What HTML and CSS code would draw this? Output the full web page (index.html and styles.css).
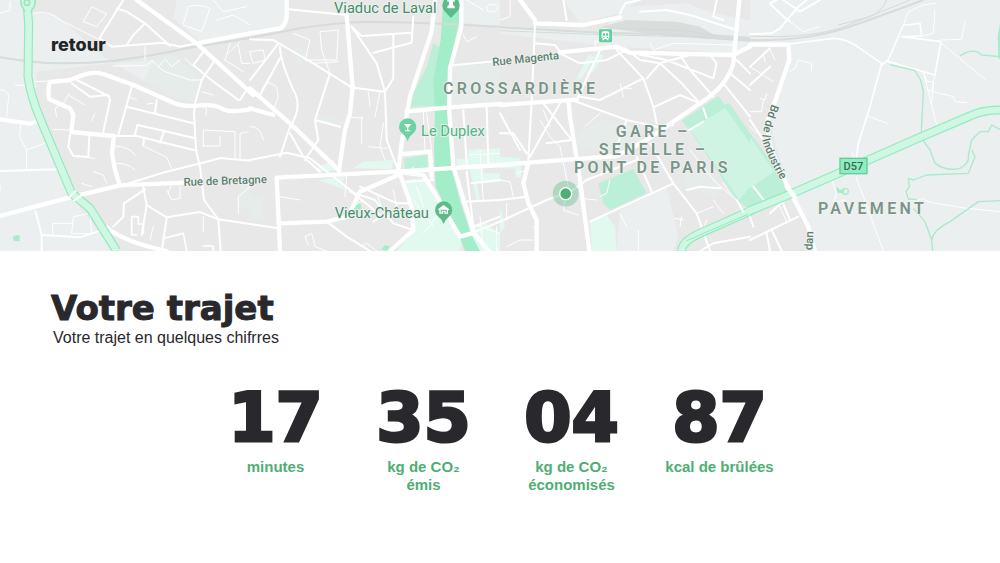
FILE: index.html
```html
<!DOCTYPE html>
<html lang="fr">
<head>
<meta charset="utf-8">
<meta name="viewport" content="width=device-width, initial-scale=1">
<title>Votre trajet</title>
<link rel="stylesheet" href="styles.css">
</head>
<body>
<header class="hero">
<svg class="map" viewBox="0 0 3000 753" role="img" aria-label="Carte du trajet">
<rect class="urban" width="3000" height="753"/>

<!-- west -->
<g>
<path class="land" d="M0 0H70L100 40L170 45L310 170L445 250L475 180L330 190L110 215L108 260L115 360L215 590L340 753H0ZM530 0H750V100L600 125L520 55Z"/>
<path class="park" d="M475 170L520 165L600 230L590 305L540 300L430 240ZM720 560L750 545V640L712 610Z"/>
<path class="mint2" d="M38 712L48 705L60 708L58 724L42 723Z"/>
<path class="rail" d="M0 172Q70 184 130 188Q230 193 330 184Q460 168 560 145L750 114"/>
<g class="r1"><path d="M410 0L590 130L760 285"/><path d="M590 130L750 100"/><path d="M0 648L210 592L360 556L550 548"/><path d="M0 358L90 371L120 360"/><path d="M750 328Q690 338 670 328Q650 312 600 316Q550 322 520 308L400 255L310 222Q280 214 250 225L210 240L150 246Q142 270 148 298L210 325L220 345L214 396L342 408L336 460L345 510L358 552"/><path d="M320 682Q370 725 500 753"/></g>
<g class="r2"><path d="M300 115L335 140L400 135L490 128L540 140L590 130"/><path d="M300 112L370 0M380 135L400 105L435 70L485 115L510 138M435 70L380 35L350 25"/><path d="M720 300L740 270M615 148L580 195L640 245L715 300M645 180L605 240L585 310L582 340L588 450L600 500L612 600L655 658L662 753"/><path d="M395 262L355 405M380 320L580 370M470 300L465 340M345 408H410L590 452M405 405L412 375L480 390L585 415M492 395L480 428M430 435L432 415"/><path d="M370 555L500 515L620 485L660 474L750 482M430 562L440 615L500 652L600 636L655 658L750 672M500 655L485 753M340 680L370 650L372 610L435 568M440 615L425 705"/><path d="M0 513L170 508L190 495M107 635L125 705V753M125 705L240 712L320 685"/><path d="M210 405L205 440L220 468L265 470L268 408M215 250L270 290L325 285L330 300L310 395M230 240L290 270L328 290"/></g>
<g class="r3"><path d="M100 40Q150 30 180 60L300 120M45 255L108 258M105 245L210 240M0 270Q25 270 26 290L20 350M62 375L58 410L80 450L135 430M80 450V510M0 40L30 30V5"/><path d="M250 65L275 20L320 42L290 80L250 65M550 70L565 20Q600 10 630 25L605 95L550 75M640 0L670 35L740 20M650 60L700 45L750 75"/><path d="M340 198L440 197L455 180L475 200L495 178L515 200L540 180M475 200L495 215L570 240H605M435 140V180M680 165L720 125M715 135L725 190H750M672 178L730 215M555 175L580 200M690 130L675 180"/><path d="M208 280L190 310L165 325L170 350M205 285L255 315M385 292L410 298M440 312L460 310M275 362L285 340M160 388L205 390M345 438Q390 440 405 465M350 490Q385 490 405 510M430 438L500 472L515 505M220 468L285 475M245 550L275 560M280 515L310 525L320 550"/><path d="M610 440V390L705 395V475M610 438H660V410M720 475V400L745 395M500 570L515 600L540 595V560M515 550L505 580M215 700L220 650L270 640L275 700ZM158 705V670H220M590 315L620 325L618 345M605 275L640 285M0 555V570M610 650V695M460 680L450 720M750 560L715 590V640"/></g>
<path class="r4" d="M395 705V650H415V672H430V700M410 705H395M490 715L550 700L560 753M640 753V738H610"/>
<path class="hw-edge" d="M80 0L86 70L84 230Q92 290 122 360L215 580L270 625L350 753"/>
<path class="hw" d="M80 0L86 70L84 230Q92 290 122 360L215 580L270 625L350 753"/>
<path class="hw-node" d="M62 0L65 18L77 35M106 0L103 18L92 35"/><path class="hw-fill" d="M65 0H103L100 18L88 38H80L68 18Z"/><circle class="ring" cx="81" cy="8" r="8"/>
<path class="r2" d="M203 597L226 574M222 602L244 586"/>
</g>

<!-- centre west -->
<g transform="translate(750 0)">
<path class="land" d="M0 0H110L103 85L0 105ZM640 0H750V85L640 65Z"/>
<path class="park" d="M605 200L750 190V300L600 315ZM205 340L280 365L270 390L200 365ZM0 590H40V655H0ZM130 135L180 160L150 200Z"/>
<path class="mint0" d="M460 540L520 535L590 660L640 700L630 753H440L490 690ZM205 500L250 480L265 510L200 515ZM310 505L340 485L430 480L425 508ZM205 540L290 530L270 550L300 575ZM655 450L750 445V490H700V520H750V545L680 550L690 600H680L660 510L620 495V475L655 480ZM655 690L700 665L750 700V753H670Z"/>
<path class="river-bank" d="M550 130L568 140L555 318L480 320L490 280L530 200ZM462 475L532 465L534 510L515 518L465 508Z"/>
<path class="mint1" d="M310 620L330 605L335 625L315 635ZM395 748L405 735L420 740L410 753Z"/>
<path class="river" d="M580 0H630L628 60L594 220L596 320L604 505L632 610L662 700L690 753H645L625 700L557 560L552 450L555 340L550 240L572 120Z"/>
<path class="rail" d="M0 114L150 85Q250 68 350 65Q500 66 750 80"/>
<g class="r1"><path d="M0 100L90 85Q105 80 110 50V0M290 45L308 262L300 340L285 390L268 505M0 265L120 370L268 512M0 325L70 345M80 533L440 515L750 495M80 533L90 753"/><path d="M555 0L545 95L480 290L455 430L445 510L460 550L485 620L490 690L420 753M634 0V80L600 205L597 325L610 500L647 620L672 700L717 753M470 335L595 322L750 312"/><path d="M445 525L330 575L295 650L230 665L90 670M440 515L520 525L560 590L630 710L665 700M460 462L540 455L545 530"/></g>
<g class="r2"><path d="M115 28L290 45M305 80L380 190L405 275L430 235V105M305 80L335 108L485 98M370 158L485 128L490 50M300 262L405 275L410 420L440 500M0 118L70 120L190 190L305 262M85 130L0 240M90 175L30 285M90 140Q90 180 130 270Q160 320 120 380L90 470M240 220L195 360L270 380M195 360L205 420L165 480"/><path d="M0 480L110 458L180 475L320 585M120 400L160 470L210 515M300 575L375 600L430 670L490 690M310 580L395 648L460 650M330 560L440 610L480 610M395 648L370 665M230 665L290 710L360 753M0 672L85 685M610 196L750 182M640 330L650 490M710 320L715 490M650 515L670 680L750 650M665 550L750 540M640 605L750 600M640 710L750 665M470 545L550 540"/></g>
<g class="r3"><path d="M0 155L40 150L45 180L10 190ZM35 270L50 245L80 260L85 290L65 345M130 100L180 120L165 180L260 180L265 90L210 95L215 150L240 220M190 190L265 185M355 275L360 320M390 275L375 350M300 352L340 355M335 350V430M400 370L390 440L405 480M355 440L410 445M0 380Q30 375 40 420M150 600L90 590M175 735L165 710L185 700L195 740L230 753M290 530L285 590M330 740L350 730L380 753M380 580L400 635M430 570L440 620M310 620L340 600"/><path d="M470 520L490 500M530 340L545 450M520 330L525 455M640 105L650 125L680 110M690 450L700 600M660 465L750 460M490 600L550 680M500 560L520 620M520 700L560 650M710 20Q725 5 745 20Q740 40 715 35ZM650 0L700 30M660 670L750 700M690 650L700 753M740 680V753"/></g>
</g>

<!-- centre east -->
<g transform="translate(1500 0)">
<path class="land" d="M0 85L300 95L360 35L390 20L560 10L640 40L750 60V145L700 160L360 140L290 135L0 100ZM360 630L500 560L535 710L520 753H350ZM190 0H420L355 40L240 70Z"/>
<path class="park" d="M230 400L300 360L380 370L440 430L310 460L235 440ZM545 530L600 500L670 560L650 590L560 560Z"/>
<path class="mint0" d="M265 165L285 170L245 235L228 240ZM295 160L312 165L280 215L258 225ZM270 660L320 645L345 680L350 753H275ZM0 470L60 475L65 530L50 535L45 505H0ZM0 620L15 680L0 700Z"/>
<path class="park2" d="M545 362L655 288L750 420V630L710 600L570 390ZM295 550L400 507L440 580L330 630L310 610Z"/>
<path class="pitch" d="M572 390L680 320L750 430V560L718 600Z"/>
<path class="park2" d="M670 315L688 310L750 400V430Z"/>
<path class="yard" d="M300 82L380 60L530 65L600 80L640 103L750 110V124L500 108Z"/>
<path class="rail" d="M0 82L300 98L500 103L750 118"/><path class="rail-thin" d="M0 92L300 104L560 110L750 124M330 85L560 92L650 108"/>
<g class="r1"><path d="M0 315L230 299M105 70L250 75L360 52M60 0L105 60M0 495L85 488L350 468L440 420L600 310Q680 260 700 190L718 0M180 157L350 140L390 158L700 165L750 140M205 300L210 350L240 540L268 753M85 488L70 550L85 610L110 660V753"/></g>
<g class="r2"><path d="M360 40L375 10L420 0M105 75L95 300L85 480M300 150L230 300M180 160L240 190L320 180L370 155M350 150L430 235L460 320L470 370M215 300L380 360L470 380L520 375M380 360L350 440M430 235L300 300L240 290M480 190L545 250L600 310M375 145L420 180L480 190L440 235M480 190L570 165M540 165L570 210L640 290M465 320L540 285L600 310M0 400L40 400L80 460M0 340L60 450M130 310L215 420L140 430M180 310L90 470M105 130L165 135L180 155M390 158L500 180L640 235L650 190L630 165M0 600L80 590M0 665L140 600L220 570L260 540L410 480M270 665L520 550M410 470L455 575M450 430L520 550L590 640L630 753M560 570L600 560L660 565M190 0L200 60M650 0L640 50L670 60M420 35L500 30L570 45L710 90M670 250L750 350M690 220L750 270M710 180L750 220M610 325L620 355M568 390L610 365"/></g>
<g class="r3"><path d="M285 125L330 120M285 125V155M360 250L370 290M370 265L395 265M255 380L300 340M120 360L150 410L180 440L205 560M200 560L190 630L235 645M240 595L290 600M330 540L320 580L300 590M130 330L150 380M80 510L50 520M0 540L30 545L40 590M20 740L60 720H100M20 610V660M100 680L115 690M545 650L540 680M525 655L550 660M415 690V753M360 640L380 680M640 600L670 640M690 580L670 550M620 660L610 690M640 620L590 640M570 450L650 550L710 600M0 60L30 50V0M450 130L460 150L520 130L700 135"/></g>
<path class="hw-edge" d="M545 753Q545 725 600 700L755 631"/><path class="hw" d="M545 753Q545 725 600 700L755 631"/>
<path class="r2" d="M710 600L730 635M600 753L640 730L750 710"/><path class="hw-line" d="M560 722L750 640"/>
</g>

<!-- east -->
<g transform="translate(2250 0)">
<path class="land" d="M0 0H750V753H175L185 690L120 570L75 430L60 350L110 210V140H0Z"/>
<path class="park2" d="M0 400L45 460L105 545L115 575L0 630Z"/><path class="pitch" d="M0 410L72 515L0 565Z"/>
<g class="rail"><path d="M0 120Q170 125 300 80Q400 45 520 0"/></g><g class="rail-thin"><path d="M0 108Q160 118 270 85L480 0M265 75L360 50Q395 35 410 0"/></g>
<g class="r1"><path d="M0 134H115L118 180L80 290L50 370L60 440L115 565L175 680L195 753"/></g>
<g class="r2"><path d="M0 103L65 100L90 85L145 20L170 0M60 10L100 50L120 65M60 10L80 0M100 0L150 35L210 0M0 200L60 145M0 255L60 200M0 360L40 420M0 720L145 650M0 650L10 680M50 700L60 753M95 600L120 660M65 690L95 753M60 640L115 590M10 560L45 605"/></g>
<path class="r4" d="M118 132L250 115Q290 115 330 145L395 190L360 320L325 430L318 480M395 195L415 180L460 75L470 75L510 70L515 108L455 110L573 125L555 225L415 185"/>
<g class="r3"><path d="M120 65L160 95L210 80M120 215L135 205L145 180L185 190V212M460 75L475 35L520 15L555 10M555 30L550 100L515 108M575 120L635 118L645 65M520 215L530 245H550V260L545 310M555 225L545 270M530 270L610 290L615 305L650 308M245 540L260 580L250 610L285 600M305 455L315 480M0 200L70 245M30 295L45 300L50 280M40 300L35 335H0M60 150L75 180M40 160L45 185M20 400L0 380M500 605L515 595L540 607L650 625L750 635M85 610L110 665"/><path d="M575 130L705 238M520 215L560 375M350 347L412 370M318 530L400 753"/></g>
<g class="stream"><path d="M420 194L495 212L512 240L520 275L514 395L522 425L540 450L555 490Q590 515 630 505Q660 490 655 465L665 420L690 395L715 395L725 375L750 388M665 450L675 470L655 520L530 525L490 540L475 535L478 560L468 575L475 597L500 598M490 625L525 665L545 720L548 753M545 720Q550 690 600 665L685 605L750 602M630 168Q670 140 695 165L750 170"/></g>
<path class="river" d="M750 70L743 110L745 170L750 180ZM258 560L270 570L285 565L280 580L262 578Z"/><circle class="stream" cx="286" cy="574" r="9"/>
<path class="hw-edge" d="M-3 633L120 583L270 518L480 425L660 348Q700 329 750 330"/><path class="hw" d="M-8 635L120 583L270 518L480 425L660 348Q700 329 750 330"/>
<path class="r1" d="M110 560L135 592"/>
</g>

<!-- place names -->
<g class="poi"><text x="1002" y="40">Viaduc de Laval</text><text class="bright" x="1263" y="408">Le Duplex</text><text x="1004" y="655">Vieux-Château</text></g>
<g class="district"><text x="1329" y="283">CROSSARDIÈRE</text><text x="1847" y="410">GARE –</text><text x="1796" y="464">SENELLE –</text><text x="1722" y="518">PONT DE PARIS</text><text x="2454" y="642">PAVEMENT</text></g>
<g class="street"><text transform="translate(551 558) rotate(-2)">Rue de Bretagne</text><text transform="translate(1478 198) rotate(-6)">Rue Magenta</text>
<path id="industrie" class="guide" d="M2315 312Q2284 394 2287 420Q2302 475 2346 545"/><text><textPath href="#industrie">Bd de l’Industrie</textPath></text>
<text transform="translate(2437 751) rotate(-87)">dan</text></g>

<!-- markers -->
<g class="pin"><path d="M1353 54L1334 34A26 26 0 1 1 1372 34Z"/><path class="glyph" d="M1342 25H1364V19L1359 15V5H1364V-6H1342V5H1347V15L1342 19Z"/></g>
<g class="pin light"><path d="M1223 424Q1218 408 1208 402A26 26 0 1 1 1238 402Q1228 408 1223 424Z"/><path class="glyph" d="M1212 372H1234L1225 383V391H1231V394H1215V391H1221V383Z"/></g>
<g class="pin"><path d="M1331 672Q1326 658 1316 651A26 26 0 1 1 1346 651Q1336 658 1331 672Z"/><path class="glyph" d="M1315 627L1331 615L1347 627V630H1344V641H1318V630H1315Z"/><path class="hole" d="M1322 629H1340V632H1322ZM1322 632H1325V638H1322ZM1329 635H1333V641H1329ZM1337 632H1340V638H1337Z"/></g>
<rect class="station" x="1797" y="88" width="39" height="39" rx="4"/><path class="glyph" d="M1810 94H1823Q1828 94 1828 100V113L1824 117L1827 121H1822L1819 117H1814L1811 121H1806L1809 117L1805 113V100Q1805 94 1810 94Z"/><path class="station" d="M1809 100H1815V107H1809ZM1818 100H1824V107H1818ZM1809 111H1813V114H1809ZM1820 111H1824V114H1820Z"/>
<circle class="halo" cx="1697" cy="581" r="39"/><circle class="here" cx="1697" cy="581" r="18"/>
<rect class="shield" x="2520" y="475" width="81" height="46"/><text class="shield-text" x="2560" y="509">D57</text>
</svg>
<a class="back" href="#">retour</a>
</header>
<main class="content">
<h1 class="title">Votre trajet</h1>
<p class="subtitle">Votre trajet en quelques chifrres</p>
<ul class="stats">
<li class="stat"><strong class="value">17</strong><span class="label">minutes</span></li>
<li class="stat"><strong class="value">35</strong><span class="label">kg de CO₂<br>émis</span></li>
<li class="stat"><strong class="value">04</strong><span class="label">kg de CO₂<br>économisés</span></li>
<li class="stat"><strong class="value">87</strong><span class="label">kcal de brûlées</span></li>
</ul>
</main>
</body>
</html>
```
FILE: styles.css
```css
* { box-sizing: border-box; }
body { margin: 0; background: #fff; color: #29282d; font-family: "Liberation Sans", Arial, sans-serif; }
.hero { position: relative; }
.map { display: block; width: 100%; height: auto; }
.back { position: absolute; top: 34px; left: 51px; color: #222629; font: 800 18px/22px Inter, sans-serif; text-decoration: none; }

.urban { fill: #e8e8e8; }
.land { fill: #ebeff0; }
.park { fill: #e6ecea; }
.park2, .river-bank { fill: #bcefd7; }
.pitch { fill: #cff4e3; }
.mint0 { fill: #e2f9ef; }
.mint1, .mint2, .river { fill: #a4edc9; }
.yard { fill: #d9dedc; }
.rail, .rail-thin, .r1, .r2, .r3, .r4, .stream, .hw, .hw-edge, .hw-line, .hw-node { fill: none; stroke-linejoin: round; }
.rail { stroke: #d5dcda; stroke-width: 6; }
.rail-thin { stroke: #d5dad8; stroke-width: 3; }
.r1, .r2, .r3, .r4 { stroke: #fff; stroke-linecap: round; }
.r1 { stroke-width: 13; }
.r2 { stroke-width: 6; }
.r3 { stroke-width: 3; }
.r4 { stroke-width: 5; }
.stream { stroke: #a7ebca; stroke-width: 4; }
.hw-edge { stroke: #91ebbd; stroke-width: 27; }
.hw { stroke: #d0f7e4; stroke-width: 20; }
.hw-line { stroke: #91ebbd; stroke-width: 3; }
.hw-node { stroke: #91ebbd; stroke-width: 5; }
.hw-fill { fill: #d0f7e4; }
.ring { fill: #e8e8e8; stroke: #91ebbd; stroke-width: 5; }

.poi, .district, .street { font-family: Roboto, sans-serif; paint-order: stroke; stroke: #f1f4f3; stroke-width: 5; stroke-linejoin: round; }
.poi { font-size: 44px; fill: #438d69; }
.bright { fill: #4fb582; }
.district { font-size: 48px; font-weight: 600; letter-spacing: 10px; fill: #799587; }
.street { font-size: 34px; font-weight: 500; fill: #5c7e6e; }
.guide { fill: none; stroke: none; }
.pin { fill: #5cbb89; }
.light { fill: #6dd3a1; }
.glyph { fill: #fff; }
.hole { fill: #5cbb89; }
.station { fill: #5dd39a; }
.halo { fill: #58bb86; fill-opacity: .38; }
.here { fill: #4fae73; stroke: #fff; stroke-width: 4; }
.shield { fill: #91edc0; stroke: #61cd98; stroke-width: 4; }
.shield-text { font: 500 33px Roboto, sans-serif; fill: #356b50; text-anchor: middle; }

.content { padding: 36px 56px 48px 51px; }
.title { margin: 0; font: 700 34px/42px "DejaVu Sans", sans-serif; -webkit-text-stroke: 1px currentColor; }
.subtitle { margin: 0; padding-left: 2px; font-size: 16px; line-height: 18px; }
.stats { display: grid; grid-template-columns: repeat(4, 148px); justify-content: center; margin: 31px 0 0; padding: 0; list-style: none; }
.stat { display: flex; flex-direction: column; align-items: center; text-align: center; }
.value { font: 700 68px/80px "DejaVu Sans", sans-serif; -webkit-text-stroke: 3px currentColor; }
.label { color: #4fae73; font-size: 15px; font-weight: 700; line-height: 18px; }
```
